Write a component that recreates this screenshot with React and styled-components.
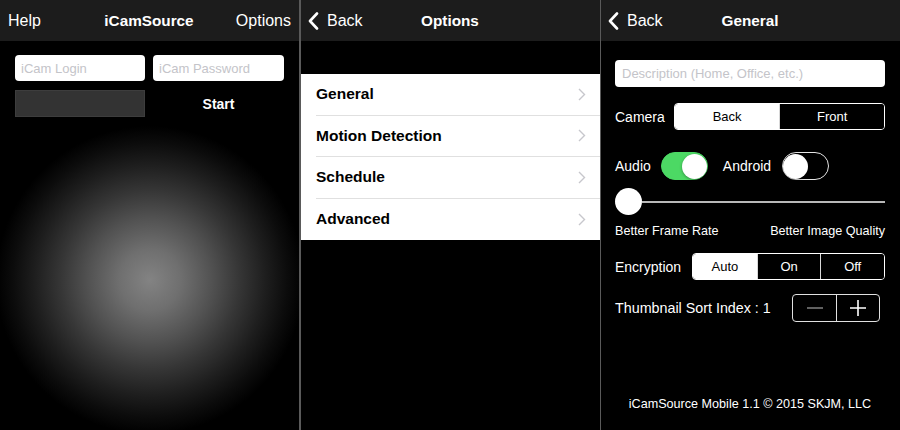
import React from "react";
import styled, { createGlobalStyle } from "styled-components";

const GlobalStyle = createGlobalStyle`
  html, body {
    margin: 0;
    padding: 0;
    background: #000;
    font-family: "Liberation Sans", Arial, sans-serif;
  }
  * { box-sizing: border-box; }
`;

const Screens = styled.div`
  display: flex;
  width: 900px;
  height: 430px;
  background: #5a5a5a;
  overflow: hidden;
`;

const Panel = styled.section`
  flex: none;
  width: 299px;
  height: 430px;
  margin-left: ${(p) => p.$gap || 0}px;
  background: #000;
  display: flex;
  flex-direction: column;
  color: #fff;
`;

const NavBar = styled.header`
  height: 41px;
  flex: none;
  background: #1c1c1c;
  display: grid;
  grid-template-columns: 1fr auto 1fr;
  align-items: center;
  padding: 0 8px 0 7px;
  font-size: 16px;
`;

const NavTitle = styled.h1`
  margin: 0;
  font-size: 15.3px;
  font-weight: 700;
  text-align: center;
`;

const NavLeft = styled.span`
  display: flex;
  align-items: center;
  gap: 8px;
  padding-left: ${(p) => (p.$plain ? 1 : 0)}px;
`;

const NavRight = styled.span`
  text-align: right;
`;

const BackChevron = () => (
  <svg width="11" height="18" viewBox="0 0 11 18">
    <path d="M9 1.5 L2 9 L9 16.5" fill="none" stroke="#fff" strokeWidth="2.6" strokeLinecap="round" strokeLinejoin="round" />
  </svg>
);

/* ---------- screen 1 ---------- */

const LoginBody = styled.div`
  flex: 1;
  padding: 14px 15px 0;
  display: grid;
  grid-template-columns: 130px 131px;
  grid-auto-rows: min-content;
  column-gap: 8px;
  row-gap: 9px;
  background: radial-gradient(
    circle 154px at 150px 239px,
    #838383 0%,
    #6f6f6f 20%,
    #525252 40%,
    #363636 58%,
    #1e1e1e 75%,
    #0c0c0c 89%,
    #000 100%
  );
`;

const TextField = styled.input`
  height: ${(p) => p.$h || 26}px;
  width: 100%;
  border: none;
  border-radius: 4px;
  background: #fff;
  padding: 0 ${(p) => p.$pad || 6}px;
  font-family: inherit;
  font-size: 13px;
  color: #000;
  outline: none;
  &::placeholder { color: #c4c4c9; }
`;

const DarkBox = styled.div`
  height: 27px;
  background: #333;
  border: 1px solid #3d3d3d;
`;

const StartButton = styled.div`
  height: 27px;
  display: flex;
  align-items: center;
  justify-content: center;
  font-size: 14px;
  font-weight: 700;
`;

/* ---------- screen 2 ---------- */

const OptionList = styled.ul`
  list-style: none;
  margin: 33px 0 0;
  padding: 0 0 0 15px;
  background: #fff;
`;

const OptionRow = styled.li`
  height: 41.5px;
  display: flex;
  align-items: center;
  justify-content: space-between;
  padding-right: 14px;
  color: #000;
  font-size: 15.5px;
  font-weight: 700;
  border-bottom: ${(p) => (p.$last ? "none" : "1px solid #e0e0e0")};
`;

const RowChevron = () => (
  <svg width="8" height="13" viewBox="0 0 8 13">
    <path d="M1 1 L6.5 6.5 L1 12" fill="none" stroke="#c7c7cc" strokeWidth="1.4" />
  </svg>
);

/* ---------- screen 3 ---------- */

const SettingsBody = styled.div`
  flex: 1;
  display: flex;
  flex-direction: column;
  padding: 19px 15px 18px 14px;
`;

const Row = styled.div`
  display: flex;
  align-items: center;
  justify-content: ${(p) => p.$justify || "flex-start"};
  gap: ${(p) => p.$gap || 0}px;
  margin-top: ${(p) => p.$mt || 0}px;
  font-size: ${(p) => p.$size || 14}px;
`;

const Label = styled.span`
  margin: 0 ${(p) => p.$right || 0}px 0 ${(p) => p.$left || 0}px;
`;

const Segmented = styled.div`
  flex: 1;
  height: 27px;
  display: grid;
  grid-template-columns: repeat(${(p) => p.$count}, 1fr);
  border: 1px solid #fff;
  border-radius: 4px;
  overflow: hidden;
`;

const Segment = styled.div`
  display: flex;
  align-items: center;
  justify-content: center;
  font-size: 13px;
  background: ${(p) => (p.$active ? "#fff" : "#000")};
  color: ${(p) => (p.$active ? "#000" : "#fff")};
  & + & { border-left: 1px solid #d8d8d8; }
`;

const Switch = styled.div`
  width: 47px;
  height: 28px;
  border-radius: 14px;
  background: ${(p) => (p.$on ? "#4cd964" : "#000")};
  border: 1.5px solid ${(p) => (p.$on ? "#4cd964" : "#e5e5e5")};
  display: flex;
  justify-content: ${(p) => (p.$on ? "flex-end" : "flex-start")};
  align-items: center;
  &::after {
    content: "";
    width: 25px;
    height: 25px;
    border-radius: 50%;
    background: #fff;
    box-shadow: 0 1px 3px rgba(0, 0, 0, 0.35);
  }
`;

const SliderKnob = styled.div`
  flex: none;
  width: 27px;
  height: 27px;
  border-radius: 50%;
  background: #fff;
`;

const SliderTrack = styled.div`
  flex: 1;
  height: 2px;
  background: #b8b8b8;
`;

const Stepper = styled.div`
  width: 88px;
  height: 28px;
  display: grid;
  grid-template-columns: 1fr 1fr;
  border: 1px solid #e0e0e0;
  border-radius: 4px;
  margin-right: 5px;
`;

const StepCell = styled.div`
  display: flex;
  align-items: center;
  justify-content: center;
  & + & { border-left: 1px solid #e0e0e0; }
`;

const Footer = styled.footer`
  margin-top: auto;
  text-align: center;
  font-size: 12.6px;
  line-height: 16px;
`;

export default function App() {
  return (
    <>
      <GlobalStyle />
      <Screens>
        <Panel>
          <NavBar>
            <NavLeft $plain>Help</NavLeft>
            <NavTitle>iCamSource</NavTitle>
            <NavRight>Options</NavRight>
          </NavBar>
          <LoginBody>
            <TextField placeholder="iCam Login" />
            <TextField placeholder="iCam Password" />
            <DarkBox />
            <StartButton>Start</StartButton>
          </LoginBody>
        </Panel>

        <Panel $gap={2}>
          <NavBar>
            <NavLeft>
              <BackChevron />
              Back
            </NavLeft>
            <NavTitle>Options</NavTitle>
            <NavRight />
          </NavBar>
          <OptionList>
            {["General", "Motion Detection", "Schedule", "Advanced"].map((name, i) => (
              <OptionRow key={name} $last={i === 3}>
                {name}
                <RowChevron />
              </OptionRow>
            ))}
          </OptionList>
        </Panel>

        <Panel $gap={1}>
          <NavBar>
            <NavLeft>
              <BackChevron />
              Back
            </NavLeft>
            <NavTitle>General</NavTitle>
            <NavRight />
          </NavBar>
          <SettingsBody>
            <TextField $h={27} $pad={7} placeholder="Description (Home, Office, etc.)" />

            <Row $mt={16} $gap={9}>
              Camera
              <Segmented $count={2}>
                <Segment $active>Back</Segment>
                <Segment>Front</Segment>
              </Segmented>
            </Row>

            <Row $mt={22} $gap={10}>
              Audio
              <Switch $on />
              <Label $left={5} $right={1}>Android</Label>
              <Switch />
            </Row>

            <Row $mt={8}>
              <SliderKnob />
              <SliderTrack />
            </Row>

            <Row $mt={9} $size={12.6} $justify="space-between">
              <span>Better Frame Rate</span>
              <span>Better Image Quality</span>
            </Row>

            <Row $mt={15} $gap={11}>
              Encryption
              <Segmented $count={3}>
                <Segment $active>Auto</Segment>
                <Segment>On</Segment>
                <Segment>Off</Segment>
              </Segmented>
            </Row>

            <Row $mt={14} $size={14.3} $justify="space-between">
              Thumbnail Sort Index : 1
              <Stepper>
                <StepCell>
                  <svg width="16" height="2" viewBox="0 0 16 2">
                    <path d="M0 1 H16" stroke="#8a8a8a" strokeWidth="1.4" />
                  </svg>
                </StepCell>
                <StepCell>
                  <svg width="16" height="16" viewBox="0 0 16 16">
                    <path d="M0 8 H16 M8 0 V16" stroke="#fff" strokeWidth="1.6" />
                  </svg>
                </StepCell>
              </Stepper>
            </Row>

            <Footer>iCamSource Mobile 1.1 © 2015 SKJM, LLC</Footer>
          </SettingsBody>
        </Panel>
      </Screens>
    </>
  );
}
